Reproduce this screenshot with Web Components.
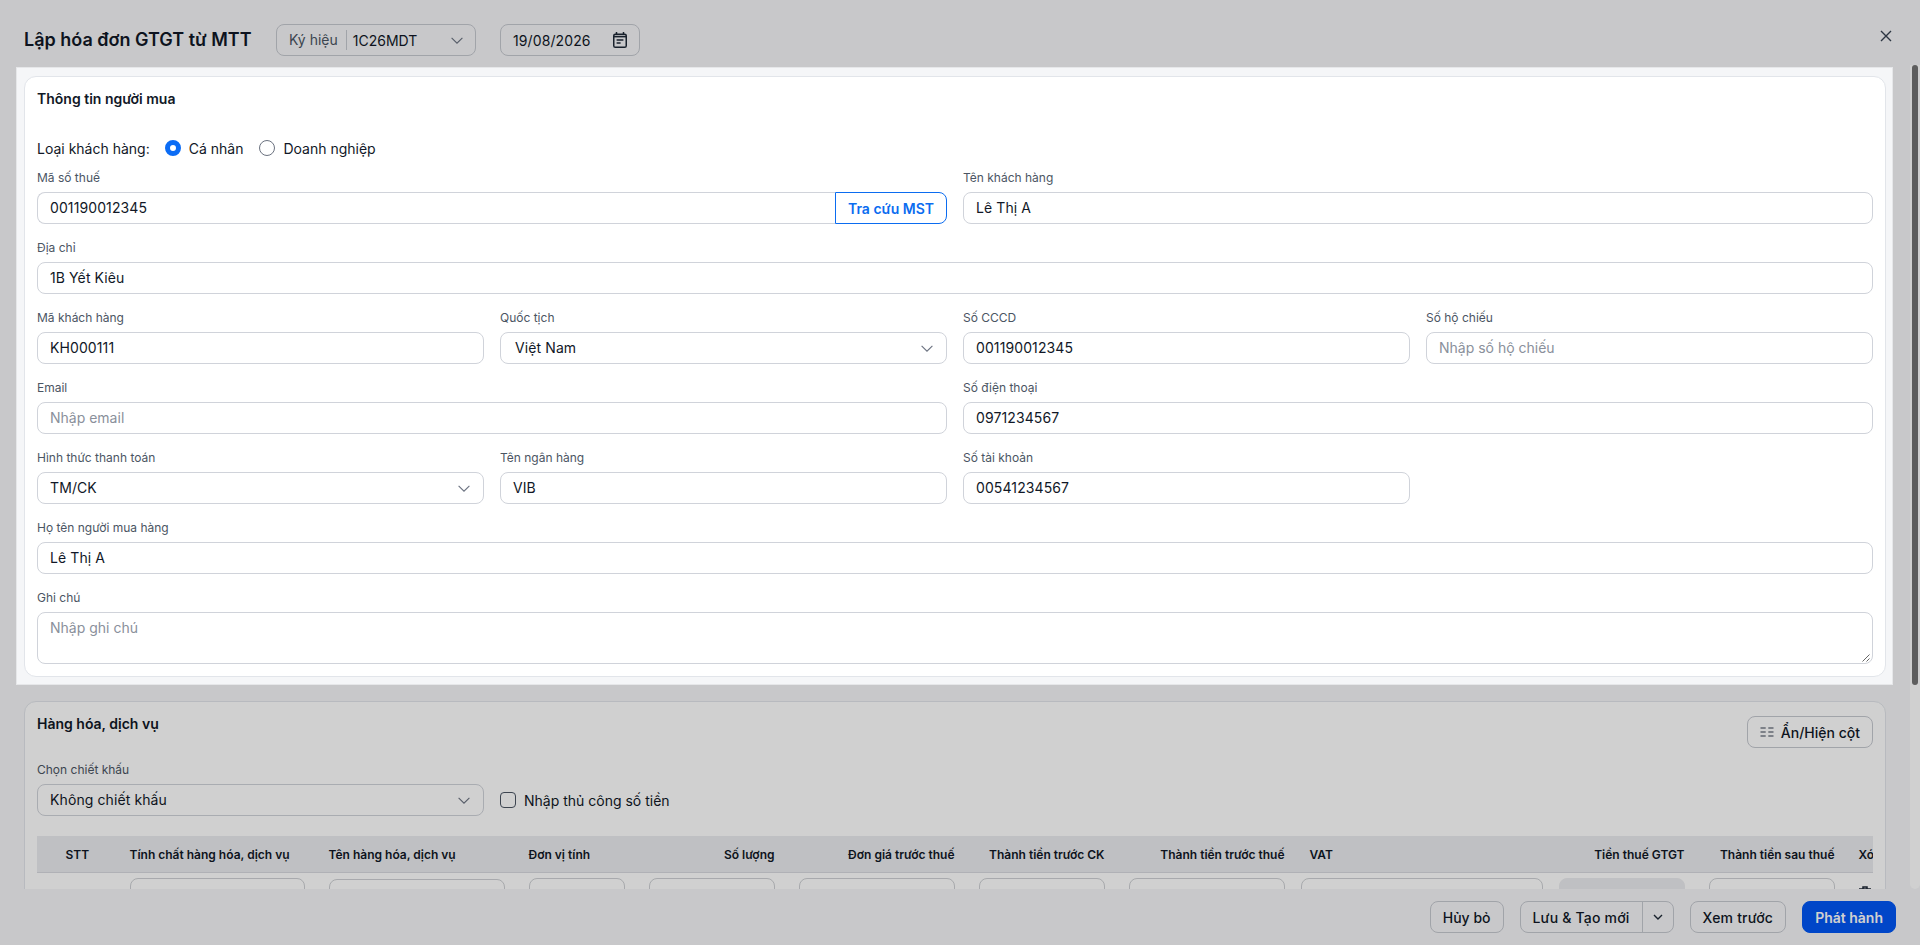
<!DOCTYPE html>
<html lang="vi">
<head>
<meta charset="utf-8">
<title>Lập hóa đơn GTGT từ MTT</title>
<style>
    html, body { margin: 0; height: 100%; overflow: hidden; }
    body { font-family: Inter, "Noto Sans", sans-serif; font-size: 14px; color: #111827; }
    .customer-type { display: flex; align-items: center; gap: 16px; height: 20px; margin: 29px 0 12px; }
    .customer-type span { margin-right: -1px; }
</style>
</head>
<body>

<invoice-modal>
    <span slot="title">Lập hóa đơn GTGT từ MTT</span>
    <symbol-select slot="tools" caption="Ký hiệu" value="1C26MDT"></symbol-select>
    <date-box slot="tools" value="19/08/2026"></date-box>

    <section-card heading="Thông tin người mua">
        <div class="customer-type">
            <span>Loại khách hàng:</span>
            <radio-option checked>Cá nhân</radio-option>
            <radio-option>Doanh nghiệp</radio-option>
        </div>
        <form-grid>
            <form-field class="s2" label="Mã số thuế" value="001190012345" addon>
                <app-button slot="addon" variant="lookup">Tra cứu MST</app-button>
            </form-field>
            <form-field class="s2" label="Tên khách hàng" value="Lê Thị A"></form-field>
            <form-field class="s4" label="Địa chỉ" value="1B Yết Kiêu"></form-field>
            <form-field label="Mã khách hàng" value="KH000111"></form-field>
            <form-field label="Quốc tịch" value="Việt Nam" type="select" indent></form-field>
            <form-field label="Số CCCD" value="001190012345"></form-field>
            <form-field label="Số hộ chiếu" placeholder="Nhập số hộ chiếu"></form-field>
            <form-field class="s2" label="Email" placeholder="Nhập email"></form-field>
            <form-field class="s2" label="Số điện thoại" value="0971234567"></form-field>
            <form-field label="Hình thức thanh toán" value="TM/CK" type="select"></form-field>
            <form-field label="Tên ngân hàng" value="VIB"></form-field>
            <form-field class="s2x" label="Số tài khoản" value="00541234567"></form-field>
            <form-field class="s4" label="Họ tên người mua hàng" value="Lê Thị A"></form-field>
            <form-field class="s4" label="Ghi chú" placeholder="Nhập ghi chú" type="area"></form-field>
        </form-grid>
    </section-card>

    <section-card heading="Hàng hóa, dịch vụ">
        <app-button slot="actions" icon="columns">Ẩn/Hiện cột</app-button>
        <discount-row></discount-row>
        <goods-table></goods-table>
    </section-card>

    <app-button slot="footer">Hủy bỏ</app-button>
    <split-button slot="footer" style="letter-spacing:.2px">Lưu &amp; Tạo mới</split-button>
    <app-button slot="footer" style="letter-spacing:.2px">Xem trước</app-button>
    <app-button slot="footer" variant="primary">Phát hành</app-button>
</invoice-modal>

<script>
const CHEVRON = `<svg width="12" height="7" viewBox="0 0 12 7" fill="none"><path d="M.6.8 6 6.2 11.4.8" stroke="#6b7280" stroke-width="1.1"/></svg>`;

// The dialog frame: header, scrolling body, footer, and the dim layer with its spotlight
class InvoiceModal extends HTMLElement {
    constructor() {
        super();
        this.attachShadow({ mode: 'open' });
        this.shadowRoot.innerHTML = `
            <style>
                :host { display: flex; flex-direction: column; height: 945px; position: relative; overflow: hidden; background: #f5f6f8; }
                header { flex: none; height: 65px; box-sizing: border-box; padding: 24px 24px 0; display: flex; }
                h1 { margin: 0; font-size: 18px; line-height: 32px; font-weight: 600; width: 252px; white-space: nowrap; }
                .tools { display: flex; gap: 24px; }
                .close { position: absolute; top: 30px; left: 1880px; width: 12px; height: 12px; }
                main { flex: 1; min-height: 0; overflow: hidden; position: relative; }
                .scroll { padding: 11px 34px 0 24px; display: flex; flex-direction: column; gap: 24px; }
                .track { position: absolute; top: 0; right: 0; bottom: 0; width: 10px; background: #fff; border-radius: 0 0 5px 5px; }
                .thumb { position: absolute; top: 0; left: 2px; width: 6px; height: 620px; background: #747474; border-radius: 3px; }
                footer { flex: none; height: 56px; box-sizing: border-box; padding-top: 12px; padding-right: 24px; display: flex; justify-content: flex-end; gap: 16px; }
                .spot { position: absolute; left: 16px; top: 67px; width: 1877px; height: 618px; pointer-events: none;
                        box-shadow: inset 0 0 0 1px rgba(0,0,0,.06), 0 0 0 3000px rgba(0,0,0,.184); }
            </style>
            <header>
                <h1><slot name="title"></slot></h1>
                <div class="tools"><slot name="tools"></slot></div>
            </header>
            <svg class="close" viewBox="0 0 12 12" fill="none"><path d="M1 1l10 10M11 1 1 11" stroke="#374151" stroke-width="1.4"/></svg>
            <main>
                <div class="scroll"><slot></slot></div>
                <div class="track"><div class="thumb"></div></div>
            </main>
            <footer><slot name="footer"></slot></footer>
            <div class="spot"></div>
        `;
    }
}

class SectionCard extends HTMLElement {
    constructor() {
        super();
        this.attachShadow({ mode: 'open' });
    }
    connectedCallback() {
        this.shadowRoot.innerHTML = `
            <style>
                :host { display: block; background: #fff; border: 1px solid #e2e5ea; border-radius: 12px; padding: 12px; }
                .head { display: flex; justify-content: space-between; align-items: flex-start; }
                h2 { margin: 0; font-size: 14px; line-height: 20px; font-weight: 600; }
                ::slotted([slot=actions]) { margin-top: 2px; }
            </style>
            <div class="head">
                <h2>${this.getAttribute('heading')}</h2>
                <slot name="actions"></slot>
            </div>
            <slot></slot>
        `;
    }
}

class RadioOption extends HTMLElement {
    constructor() {
        super();
        this.attachShadow({ mode: 'open' });
        this.shadowRoot.innerHTML = `
            <style>
                :host { display: inline-flex; align-items: center; gap: 8px; }
                i { width: 16px; height: 16px; box-sizing: border-box; border-radius: 50%; border: 1px solid #6b7280; background: #fff; }
                :host([checked]) i { border: 5px solid #0b6cf5; }
            </style>
            <i></i><slot></slot>
        `;
    }
}

class FormGrid extends HTMLElement {
    constructor() {
        super();
        this.attachShadow({ mode: 'open' });
        this.shadowRoot.innerHTML = `
            <style>
                :host { display: grid; grid-template-columns: repeat(4, 1fr); gap: 16px; }
                ::slotted(.s2) { grid-column: span 2; }
                ::slotted(.s4) { grid-column: span 4; }
            </style>
            <slot></slot>
        `;
    }
}

// Label on top, boxed value under it; type is text (default), select or area
class FormField extends HTMLElement {
    constructor() {
        super();
        this.attachShadow({ mode: 'open' });
    }
    connectedCallback() {
        const type = this.getAttribute('type') || 'text';
        const value = this.getAttribute('value');
        const text = value || this.getAttribute('placeholder') || '';
        const grip = type === 'area'
            ? `<svg class="grip" width="8" height="8" viewBox="0 0 8 8" fill="none"><path d="M.5 7.5l7-7M4.5 7.5l3-3" stroke="#555" stroke-width=".9"/></svg>` : '';
        this.shadowRoot.innerHTML = `
            <style>
                :host { display: block; min-width: 0; }
                label { display: block; font-size: 12px; line-height: 16px; margin-bottom: 6px; color: #4b5563; }
                .row { display: flex; }
                .box { flex: 1; min-width: 0; height: 32px; box-sizing: border-box; border: 1px solid #d0d3da; border-radius: 8px; background: #fff;
                       padding: 0 13px 0 12px; display: flex; align-items: center; justify-content: space-between; line-height: 20px; position: relative; }
                .val { letter-spacing: .1px; }
                .ph { color: #8a909b; }
                .box.area { height: 52px; align-items: flex-start; padding-top: 5px; }
                .grip { position: absolute; right: 2px; bottom: 1px; }
                :host([addon]) .box { border-radius: 8px 0 0 8px; border-right: 0; }
                :host([indent]) .box { padding-left: 14px; }
            </style>
            <label>${this.getAttribute('label')}</label>
            <div class="row">
                <div class="box ${type}">
                    <span class="${value ? 'val' : 'ph'}">${text}</span>
                    ${type === 'select' ? CHEVRON : ''}${grip}
                </div>
                <slot name="addon"></slot>
            </div>
        `;
    }
}

class AppButton extends HTMLElement {
    constructor() {
        super();
        this.attachShadow({ mode: 'open' });
    }
    connectedCallback() {
        const icon = this.getAttribute('icon') === 'columns'
            ? `<svg width="14" height="12" viewBox="0 0 14 12" fill="none"><path d="M.5 2h5.2M.5 6h5.2M.5 10h5.2M8.3 2h5.2M8.3 6h5.2M8.3 10h5.2" stroke="#374151" stroke-width="1.1"/></svg>` : '';
        this.shadowRoot.innerHTML = `
            <style>
                :host { display: inline-flex; align-items: center; gap: 7px; height: 32px; box-sizing: border-box; padding: 0 12px;
                        border: 1px solid #c6c9d0; border-radius: 8px; font-weight: 500; white-space: nowrap; }
                :host([variant=primary]) { background: #0056f5; border-color: #0056f5; color: #fff; font-weight: 600; }
                :host([variant=lookup]) { width: 112px; padding: 0; justify-content: center; color: #0b6cf0; border-color: #0b6cf0; background: #fff;
                        border-radius: 0 8px 8px 0; font-weight: 600; }
            </style>
            ${icon}<slot></slot>
        `;
    }
}

class SplitButton extends HTMLElement {
    constructor() {
        super();
        this.attachShadow({ mode: 'open' });
        this.shadowRoot.innerHTML = `
            <style>
                :host { display: inline-flex; height: 32px; box-sizing: border-box; border: 1px solid #c6c9d0; border-radius: 8px; font-weight: 500; white-space: nowrap; }
                .main { padding: 0 12px; display: flex; align-items: center; border-right: 1px solid #c6c9d0; }
                .more { width: 30px; display: flex; align-items: center; justify-content: center; }
            </style>
            <div class="main"><slot></slot></div>
            <div class="more"><svg width="10" height="6" viewBox="0 0 10 6" fill="none"><path d="M1 1l4 4 4-4" stroke="#1f2937" stroke-width="1.4"/></svg></div>
        `;
    }
}

class SymbolSelect extends HTMLElement {
    constructor() {
        super();
        this.attachShadow({ mode: 'open' });
    }
    connectedCallback() {
        this.shadowRoot.innerHTML = `
            <style>
                :host { display: flex; align-items: center; width: 200px; height: 32px; box-sizing: border-box; border: 1px solid #c6c9d0; border-radius: 8px; padding: 0 12px; }
                .cap { color: #4b5563; padding-right: 8px; border-right: 1px solid #c6c9d0; line-height: 20px; }
                .val { padding-left: 6px; flex: 1; }
            </style>
            <span class="cap">${this.getAttribute('caption')}</span>
            <span class="val">${this.getAttribute('value')}</span>
            ${CHEVRON}
        `;
    }
}

class DateBox extends HTMLElement {
    constructor() {
        super();
        this.attachShadow({ mode: 'open' });
    }
    connectedCallback() {
        this.shadowRoot.innerHTML = `
            <style>
                :host { display: flex; align-items: center; justify-content: space-between; width: 140px; height: 32px; box-sizing: border-box; border: 1px solid #c6c9d0; border-radius: 8px; padding: 0 12px; }
                span { letter-spacing: .1px; }
            </style>
            <span>${this.getAttribute('value')}</span>
            <svg width="14" height="16" viewBox="0 0 14 16" fill="none">
                <rect x=".75" y="2.25" width="12.5" height="13" rx="1.6" stroke="#1f2937" stroke-width="1.5"/>
                <path d="M3.5 0v3M10.5 0v3" stroke="#1f2937" stroke-width="1.5"/>
                <path d="M1 4.6h12" stroke="#1f2937" stroke-width="1.6"/>
                <path d="M3.6 8h6.8M3.6 11h4" stroke="#1f2937" stroke-width="1.4"/>
            </svg>
        `;
    }
}

class DiscountRow extends HTMLElement {
    constructor() {
        super();
        this.attachShadow({ mode: 'open' });
        this.shadowRoot.innerHTML = `
            <style>
                :host { display: grid; grid-template-columns: repeat(4, 1fr); column-gap: 16px; margin-top: 14px; }
                .check { display: flex; align-items: center; gap: 8px; grid-column: span 3; padding-top: 22px; }
                i { width: 16px; height: 16px; box-sizing: border-box; border: 1px solid #4b5563; border-radius: 4px; background: #fff; }
            </style>
            <form-field label="Chọn chiết khấu" value="Không chiết khấu" type="select"></form-field>
            <div class="check"><i></i><span>Nhập thủ công số tiền</span></div>
        `;
    }
}

// Column sizes come from the reference; the last column runs past the card and gets cut off
const GOODS_COLUMNS = [
    { title: 'STT', width: 80.5, align: 'center' },
    { title: 'Tính chất hàng hóa, dịch vụ', width: 199, box: 'select', text: 'Hàng hóa, dịch vụ' },
    { title: 'Tên hàng hóa, dịch vụ', width: 200, box: 'input', top: 1 },
    { title: 'Đơn vị tính', width: 120, box: 'input' },
    { title: 'Số lượng', width: 150, align: 'right', box: 'input' },
    { title: 'Đơn giá trước thuế', width: 180, align: 'right', box: 'input' },
    { title: 'Thành tiền trước CK', width: 150, align: 'right', box: 'input' },
    { title: 'Thành tiền trước thuế', width: 180, align: 'right', box: 'input' },
    { title: 'VAT', width: 250, box: 'input', wide: true },
    { title: 'Tiền thuế GTGT', width: 150, align: 'right', box: 'locked' },
    { title: 'Thành tiền sau thuế', width: 150, align: 'right', box: 'input' },
    { title: 'Xóa', width: 60, box: 'trash' },
];

class GoodsTable extends HTMLElement {
    constructor() {
        super();
        this.attachShadow({ mode: 'open' });
        const template = GOODS_COLUMNS.map(c => c.width + 'px').join(' ');
        const head = GOODS_COLUMNS.map(c =>
            `<div class="th ${c.align || ''} ${c.wide ? 'vat' : ''}">${c.title}</div>`).join('');
        const cells = GOODS_COLUMNS.map(c => {
            if (c.box === 'trash') {
                return `<div class="td"><svg class="trash" width="12" height="14" viewBox="0 0 12 14" fill="none"><path d="M0 3h12M4 3V1h4v2M1.5 3l.7 10h7.6l.7-10" stroke="#1f2937" stroke-width="1.5"/></svg></div>`;
            }
            if (!c.box) return '<div class="td"></div>';
            return `<div class="td ${c.wide ? 'vat-td' : ''}"><div class="box ${c.box}" style="margin-top:${c.top || 0}px">${c.text || ''}</div></div>`;
        }).join('');
        this.shadowRoot.innerHTML = `
            <style>
                :host { display: block; margin-top: 20px; overflow: hidden; }
                .grid { display: grid; grid-template-columns: ${template}; width: max-content; }
                .th { background: #ebecef; border-bottom: 1px solid #d8d9df; height: 37px; box-sizing: border-box; padding: 0 12px;
                      display: flex; align-items: center; font-size: 12px; font-weight: 600; white-space: nowrap; }
                .center { justify-content: center; }
                .right { justify-content: flex-end; }
                .vat { padding-left: 13px; }
                .td { padding: 5px 12px 0; height: 40px; box-sizing: border-box; }
                .vat-td { padding: 5px 4px 0; }
                .box { height: 32px; box-sizing: border-box; border: 1px solid #ced0d4; border-radius: 8px; padding: 0 12px; line-height: 32px; background: #fff; white-space: nowrap; }
                .locked { background: #ebecef; border-color: #ebecef; }
                .trash { display: block; margin-top: 8px; }
            </style>
            <div class="grid">${head}${cells}</div>
        `;
    }
}

customElements.define('invoice-modal', InvoiceModal);
customElements.define('section-card', SectionCard);
customElements.define('radio-option', RadioOption);
customElements.define('form-grid', FormGrid);
customElements.define('form-field', FormField);
customElements.define('app-button', AppButton);
customElements.define('split-button', SplitButton);
customElements.define('symbol-select', SymbolSelect);
customElements.define('date-box', DateBox);
customElements.define('discount-row', DiscountRow);
customElements.define('goods-table', GoodsTable);
</script>
</body>
</html>
